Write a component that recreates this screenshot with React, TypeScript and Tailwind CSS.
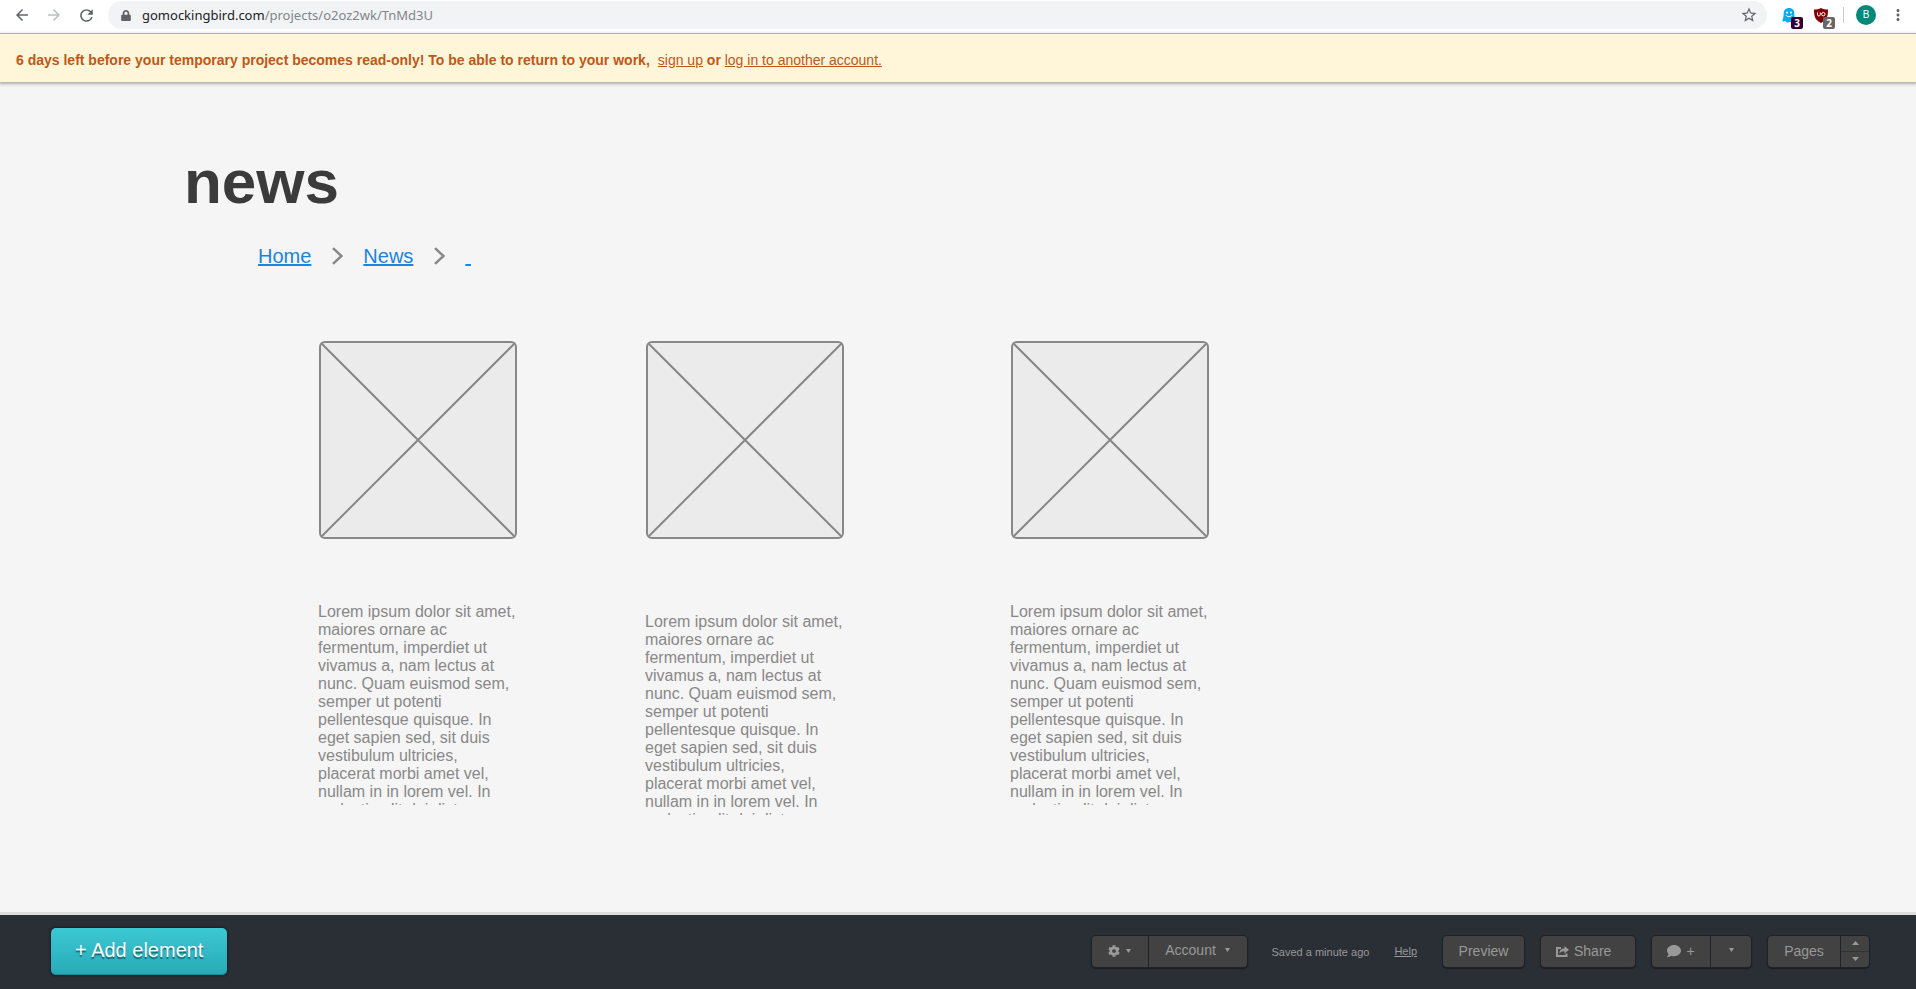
import { FaCog, FaComment, FaLock } from "react-icons/fa";
import { MdArrowBack, MdArrowForward, MdRefresh, MdStarBorder, MdMoreVert } from "react-icons/md";

const LOREM =
  "Lorem ipsum dolor sit amet, maiores ornare ac fermentum, imperdiet ut vivamus a, nam lectus at nunc. Quam euismod sem, semper ut potenti pellentesque quisque. In eget sapien sed, sit duis vestibulum ultricies, placerat morbi amet vel, nullam in in lorem vel. In molestie elit dui dictum.";

function GhostIcon() {
  return (
    <svg viewBox="0 0 14 15" className="h-[15px] w-[14px]" aria-hidden="true">
      <path
        d="M7 0C3.6 0 1.7 2.4 1.7 5.4c0 2.6-.5 4.6-1.5 7.6 1 .6 1.9.5 2.8-.2.7 1.2 1.7 1.8 2.7 1.8.9 0 1.3-.7 2-.7.8 0 1.6.8 2.7.5.6-.2.8-1 1-1.6.6.4 1.3.5 2 .2-.8-2.6-1.1-4.9-1.1-7.6C12.3 2.4 10.4 0 7 0Z"
        fill="#00aef0"
      />
      <circle cx="5" cy="4.600" r="1.100" fill="#fff" />
      <circle cx="9" cy="4.600" r="1.100" fill="#fff" />
      <path d="M3.800 7c1.200 2.200 5.200 2.200 6.400 0" fill="none" stroke="#fff" strokeWidth="1" />
    </svg>
  );
}

function ShieldIcon() {
  return (
    <svg viewBox="0 0 14 15" className="h-[15px] w-[14px]" aria-hidden="true">
      <path d="M7 0c2 1.300 4.500 1.600 7 1.600 0 7-1 10.400-7 13.400C1 12 0 8.600 0 1.600 2.500 1.600 5 1.300 7 0Z" fill="#800000" />
      <path d="M3.500 4.500v2.300c0 1.600 2.800 1.600 2.800 0V4.500" fill="none" stroke="#fff" strokeWidth="1" />
      <circle cx="9.300" cy="6.200" r="1.700" fill="none" stroke="#fff" strokeWidth="1" />
    </svg>
  );
}

function ShareIcon() {
  return (
    <svg viewBox="0 0 13 11" className="h-[11px] w-[13px]" aria-hidden="true">
      <path d="M5 2H1v8h9.500V7.500" fill="none" stroke="#999" strokeWidth="2" />
      <path d="M8.500 0 13 3.800 8.500 7.500V5.200C6 5.100 4.500 5.800 3.200 7.800 3.400 4.500 5.200 2.500 8.500 2.300Z" fill="#999" />
    </svg>
  );
}

function Chevron() {
  return (
    <svg viewBox="0 0 12 18" className="h-[18px] w-[12px]" aria-hidden="true">
      <path d="M2 1.200 10.500 9 2 16.800" fill="none" stroke="#888" strokeWidth="2.500" />
    </svg>
  );
}

function Placeholder() {
  return (
    <svg viewBox="0 0 198 198" className="block size-[198px]" role="img" aria-label="Image placeholder">
      <rect x="1" y="1" width="196" height="196" rx="5" fill="#ebebeb" stroke="#888" strokeWidth="2" />
      <path d="M2 2 196 196M196 2 2 196" stroke="#888" strokeWidth="2" />
    </svg>
  );
}

function Caret({ up = false, wide = false }: { up?: boolean; wide?: boolean }) {
  return (
    <svg viewBox="0 0 8 5" className={wide ? "h-[4px] w-[7px]" : "h-[4px] w-[5px]"} preserveAspectRatio="none" aria-hidden="true">
      <path d={up ? "M0 5 4 0l4 5Z" : "M0 0h8L4 5Z"} fill="#999" />
    </svg>
  );
}

const group =
  "flex h-[31px] overflow-hidden rounded-[4px] bg-[#424242] text-sm text-[#999] shadow-[0_0_0_1px_#1f2226,0_1px_1px_1px_#1b1d21]";

export default function App() {
  return (
    <div className="flex min-h-screen flex-col bg-[#f5f5f5] font-['Liberation_Sans',Arial,sans-serif]">
      <header className="flex h-[34px] items-center border-b border-[#b3b1b0] bg-white pr-[9px] pb-[3px] pl-[13px] text-[#5f6368]">
        <nav className="flex items-center gap-[14px]" aria-label="Browser">
          <button aria-label="Back"><MdArrowBack className="size-[18px]" /></button>
          <button aria-label="Forward" className="text-[#bdbfc1]"><MdArrowForward className="size-[18px]" /></button>
          <button aria-label="Reload"><MdRefresh className="size-[19px]" /></button>
        </nav>
        <div className="ml-3 flex h-[28px] flex-1 items-center rounded-full bg-[#f1f3f4] pr-[9px] pl-[13px]">
          <FaLock className="h-[11px] w-[10px]" />
          <p className="ml-[11px] flex-1 font-['Noto_Sans',sans-serif] text-[13px] leading-[20px] text-[#80868b]">
            <span className="text-[#202124]">gomockingbird.com</span>/projects/o2oz2wk/TnMd3U
          </p>
          <button aria-label="Bookmark"><MdStarBorder className="size-[18px]" /></button>
        </div>
        <button className="relative ml-[15px]" aria-label="Ghostery, 3 items">
          <GhostIcon />
          <span className="absolute top-[9px] left-[9px] h-[12px] w-[12px] rounded-[2px] bg-[#330033] text-center font-['Open_Sans',sans-serif] text-[10px] leading-[12px] font-bold text-white">3</span>
        </button>
        <button className="relative ml-[18px]" aria-label="uBlock, 2 items">
          <ShieldIcon />
          <span className="absolute top-[9px] left-[9px] h-[12px] w-[12px] rounded-[2px] bg-[#666] text-center font-['Open_Sans',sans-serif] text-[10px] leading-[12px] font-bold text-white">2</span>
        </button>
        <span className="ml-[15px] h-[16px] w-px bg-[#ccc]" />
        <button className="ml-[12px] size-[20px] rounded-full bg-[#00897b] text-[10px] leading-[20px] text-white">B</button>
        <button aria-label="Menu" className="ml-[13px]"><MdMoreVert className="size-[18px]" /></button>
      </header>

      <div className="flex h-[48px] items-center bg-[#fff6d9] pt-[3px] pl-4 text-sm text-[#c05717] shadow-[0_1px_3px_1px_#aaa]">
        <p>
          <strong>6 days left before your temporary project becomes read-only! To be able to return to your work,</strong>
          <a href="#signup" className="ml-2 underline">sign up</a> <strong>or</strong>{" "}
          <a href="#login" className="underline">log in to another account.</a>
        </p>
      </div>

      <main className="relative min-h-[830px] flex-1">
        <h1 className="absolute top-[64px] left-[184px] text-[62px] leading-[72px] font-bold text-[#3b3b3b]">news</h1>
        <nav aria-label="Breadcrumb" className="absolute top-[162px] left-[258px] flex items-center gap-5 text-xl leading-[24px] text-[#1b84dd]">
          <a href="#home" className="underline">Home</a>
          <Chevron />
          <a href="#news" className="underline">News</a>
          <Chevron />
          <a href="#current" className="whitespace-pre underline" aria-label="Current page">{" "}</a>
        </nav>
        <div className="absolute top-[259px] left-[319px]"><Placeholder /></div>
        <div className="absolute top-[259px] left-[646px]"><Placeholder /></div>
        <div className="absolute top-[259px] left-[1011px]"><Placeholder /></div>
        <p className="absolute top-[521px] left-[318px] h-[202px] w-[200px] overflow-hidden text-base leading-[18px] text-[#888]">{LOREM}</p>
        <p className="absolute top-[531px] left-[645px] h-[202px] w-[200px] overflow-hidden text-base leading-[18px] text-[#888]">{LOREM}</p>
        <p className="absolute top-[521px] left-[1010px] h-[202px] w-[200px] overflow-hidden text-base leading-[18px] text-[#888]">{LOREM}</p>
      </main>

      <footer className="flex h-[77px] items-center justify-between border-t-[3px] border-[#dcdddd] bg-[#2a2e35] pr-[47px] pb-[2px] pl-[51px]">
        <button className="h-[47px] rounded-[5px] bg-linear-to-b from-[#3cc8d2] to-[#26aab8] px-6 pb-[3px] text-xl text-white shadow-[0_0_2px_1px_#1d1f24,inset_0_-1px_0_#1c8996] text-shadow-[0_2px_1px_#14656e]">
          + Add element
        </button>
        <div className="flex items-center">
          <div className={group}>
            <button aria-label="Settings" className="flex w-[57px] items-center justify-center gap-[6px] border-r border-[#1f2226]">
              <FaCog className="size-[12px]" />
              <Caret />
            </button>
            <button className="flex w-[98px] items-center justify-center gap-[9px] pb-[3px]">
              Account
              <Caret />
            </button>
          </div>
          <span className="ml-[25px] pt-[2px] text-[11px] text-[#999]">Saved a minute ago</span>
          <a href="#help" className="ml-[25px] text-[11px] text-[#999] underline">Help</a>
          <div className={`ml-[26px] ${group}`}>
            <button className="w-[81px]">Preview</button>
          </div>
          <div className={`ml-[17px] ${group}`}>
            <button className="flex w-[94px] items-center gap-[5px] pl-[15px]">
              <ShareIcon />
              Share
            </button>
          </div>
          <div className={`ml-[17px] ${group}`}>
            <button aria-label="Add comment" className="flex w-[59px] items-center justify-center gap-[5px] border-r border-[#1f2226]">
              <FaComment className="size-[14px]" />+
            </button>
            <button aria-label="Comment options" className="flex w-[40px] items-center justify-center pb-[3px]"><Caret /></button>
          </div>
          <div className={`ml-[17px] ${group}`}>
            <button className="w-[73px] border-r border-[#1f2226]">Pages</button>
            <div className="flex w-[28px] flex-col">
              <button aria-label="Previous page" className="flex flex-1 items-center justify-center border-b border-[#303236]"><Caret up wide /></button>
              <button aria-label="Next page" className="flex flex-1 items-center justify-center"><Caret wide /></button>
            </div>
          </div>
        </div>
      </footer>
    </div>
  );
}
